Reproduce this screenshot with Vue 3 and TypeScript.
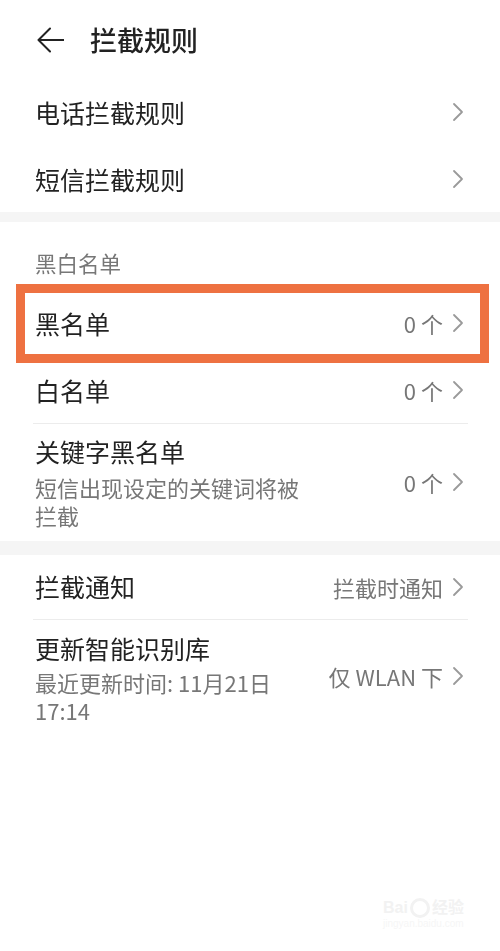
<script setup lang="ts">
interface Row {
  title: string
  sub?: string[]
  value?: string
  cls: string
  marked?: boolean
}
const first: Row[] = [
  { title: '电话拦截规则', cls: 'r-a' },
  { title: '短信拦截规则', cls: 'r-a' },
]
const lists: Row[] = [
  { title: '黑名单', value: '0 个', cls: 'r-b', marked: true },
  { title: '白名单', value: '0 个', cls: 'r-c' },
  { title: '关键字黑名单', sub: ['短信出现设定的关键词将被', '拦截'], value: '0 个', cls: 'r-d' },
]
const last: Row[] = [
  { title: '拦截通知', value: '拦截时通知', cls: 'r-e' },
  { title: '更新智能识别库', sub: ['最近更新时间: 11月21日', '17:14'], value: '仅 WLAN 下', cls: 'r-f' },
]
</script>

<template>
  <div class="page">
    <div class="soft">
      <header class="bar">
        <svg class="back" width="28" height="28" viewBox="0 0 28 28" fill="none">
          <path d="M14 2.5 2.5 14 14 25.5M3 14h24.5" stroke="#222" stroke-width="2" stroke-linecap="round" stroke-linejoin="round" />
        </svg>
        <h1>拦截规则</h1>
      </header>

      <section class="group">
        <div v-for="r in first" :key="r.title" class="row" :class="r.cls">
          <div class="main"><div class="title">{{ r.title }}</div></div>
          <svg class="chev" width="13" height="20" viewBox="0 0 13 20" fill="none"><path d="m2 2 8 8-8 8" /></svg>
        </div>
      </section>
      <div class="band band-a"></div>

      <section class="group">
        <div class="caption">黑白名单</div>
        <div v-for="r in lists" :key="r.title" class="row" :class="[r.cls, { marked: r.marked }]">
          <div class="main">
            <div class="title">{{ r.title }}</div>
            <div v-for="s in r.sub" :key="s" class="sub">{{ s }}</div>
          </div>
          <span class="value">{{ r.value }}</span>
          <svg class="chev" width="13" height="20" viewBox="0 0 13 20" fill="none"><path d="m2 2 8 8-8 8" /></svg>
        </div>
      </section>
      <div class="band band-b"></div>

      <section class="group">
        <div v-for="r in last" :key="r.title" class="row" :class="r.cls">
          <div class="main">
            <div class="title">{{ r.title }}</div>
            <div v-for="s in r.sub" :key="s" class="sub">{{ s }}</div>
          </div>
          <span class="value">{{ r.value }}</span>
          <svg class="chev" width="13" height="20" viewBox="0 0 13 20" fill="none"><path d="m2 2 8 8-8 8" /></svg>
        </div>
      </section>
    </div>

    <div class="mark">
      <div class="mark-top">Bai<span class="paw"></span>经验</div>
      <div class="mark-url">jingyan.baidu.com</div>
    </div>
  </div>
</template>

<style>
html, body { margin: 0; background: #fff; }
</style>

<style scoped>
.page {
  position: relative;
  width: 500px;
  height: 951px;
  overflow: hidden;
  background: #fff;
  font-family: "Noto Sans CJK SC", "Liberation Sans", sans-serif;
  color: #222;
}
.soft { filter: blur(0.45px); }
.bar {
  height: 79px;
  display: flex;
  align-items: center;
  padding: 0 0 0 36px;
  gap: 26px;
  box-sizing: border-box;
}
.back { flex: none; }
h1 {
  margin: 0;
  font-size: 27px;
  font-weight: 500;
  line-height: 80px;
  color: #222;
}
.group { display: flex; flex-direction: column; }
.row {
  position: relative;
  display: flex;
  align-items: center;
  padding: 0 35px;
  box-sizing: border-box;
}
.r-a { height: 66.5px; }
.r-b { height: 67px; }
.r-c { height: 66.5px; }
.r-d { height: 118px; }
.r-e { height: 64px; }
.r-f { height: 118px; }
.r-d::before, .r-f::before {
  content: "";
  position: absolute;
  left: 33px;
  right: 32px;
  top: 0;
  height: 1px;
  background: #ececec;
}
.marked::after {
  content: "";
  position: absolute;
  left: 16px;
  right: 11px;
  top: -6px;
  bottom: -6px;
  border: 9px solid #ee7141;
  pointer-events: none;
}
.main { flex: 1; min-width: 0; }
.title { font-size: 25px; line-height: 34px; color: #222; }
.sub { font-size: 22px; line-height: 28px; color: #777; }
.r-d .title { margin-bottom: 5px; }
.r-d .main { transform: translateY(-1px); }
.r-e .main { transform: translateY(-1px); }
.r-f .title { margin-bottom: 3px; }
.r-f .main { transform: translateY(-1px); }
.value {
  flex: none;
  font-size: 22px;
  line-height: 30px;
  color: #777;
  margin-right: 9px;
}
.chev { flex: none; }
.chev path {
  stroke: #9a9a9a;
  stroke-width: 1.8;
  stroke-linecap: round;
  stroke-linejoin: round;
}
.r-f .value, .r-f .chev { margin-top: -4px; }
.band { background: #f5f5f5; }
.band-a { height: 10px; }
.band-b { height: 14px; }
.caption {
  height: 67.5px;
  padding: 22px 35px 0;
  box-sizing: border-box;
  font-size: 21.5px;
  line-height: 38px;
  color: #777;
}
.mark {
  position: absolute;
  left: 383px;
  top: 898px;
  color: #f2f2f2;
}
.mark-top {
  display: flex;
  align-items: center;
  font-family: "Liberation Sans", "Noto Sans CJK SC", sans-serif;
  font-size: 16px;
  font-weight: 700;
  line-height: 20px;
}
.paw {
  width: 20px;
  height: 20px;
  margin: 0 2px;
  border-radius: 50%;
  border: 3px solid #f2f2f2;
  box-sizing: border-box;
}
.mark-url {
  font-family: "Liberation Sans", sans-serif;
  font-size: 10px;
  line-height: 12px;
  color: #f6f6f6;
}
</style>
